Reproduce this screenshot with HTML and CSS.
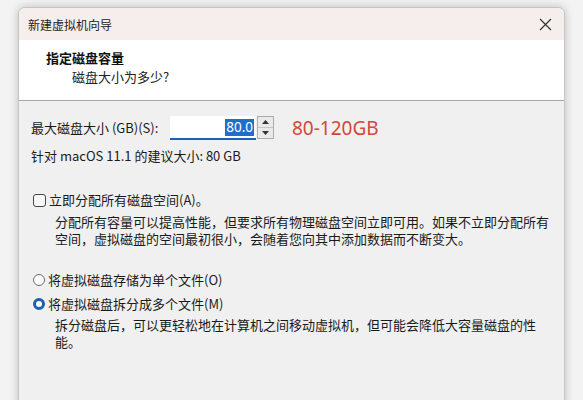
FILE: index.html
```html
<!DOCTYPE html>
<html lang="zh-CN">
<head>
<meta charset="utf-8">
<title>新建虚拟机向导</title>
<link rel="stylesheet" href="styles.css">
</head>
<body>
<div class="window">
  <div class="titlebar">
    <span class="title">新建虚拟机向导</span>
    <span class="close">
      <svg width="13" height="13" viewBox="0 0 13 13"><path d="M1 1 L12 12 M12 1 L1 12" stroke="#333" stroke-width="1.2" fill="none"/></svg>
    </span>
  </div>
  <div class="header">
    <div class="h-title">指定磁盘容量</div>
    <div class="h-sub">磁盘大小为多少?</div>
  </div>
  <div class="content">
    <div class="field-row">
      <span class="label">最大磁盘大小 (GB)(S):</span>
      <div class="spin">
        <div class="input"><span class="sel">80.0</span></div>
        <div class="spin-btns">
          <div class="sb"><svg width="7" height="4" viewBox="0 0 7 4"><path d="M0 4 L3.5 0 L7 4Z" fill="#333"/></svg></div>
          <div class="sb"><svg width="7" height="4" viewBox="0 0 7 4"><path d="M0 0 L3.5 4 L7 0Z" fill="#333"/></svg></div>
        </div>
      </div>
      <span class="note">80-120GB</span>
    </div>
    <div class="rec">针对 macOS 11.1 的建议大小: 80 GB</div>

    <div class="opt first">
      <span class="checkbox"></span>
      <span class="opt-label">立即分配所有磁盘空间(A)。</span>
    </div>
    <p class="desc">分配所有容量可以提高性能，但要求所有物理磁盘空间立即可用。如果不立即分配所有<br>空间，虚拟磁盘的空间最初很小，会随着您向其中添加数据而不断变大。</p>

    <div class="opt radio-first">
      <span class="radio"></span>
      <span class="opt-label">将虚拟磁盘存储为单个文件(O)</span>
    </div>
    <div class="opt radio-second">
      <span class="radio on"></span>
      <span class="opt-label">将虚拟磁盘拆分成多个文件(M)</span>
    </div>
    <p class="desc last">拆分磁盘后，可以更轻松地在计算机之间移动虚拟机，但可能会降低大容量磁盘的性<br>能。</p>
  </div>
</div>
</body>
</html>
```
FILE: styles.css
```css
html, body {
  margin: 0;
  padding: 0;
}
body {
  width: 583px;
  height: 400px;
  overflow: hidden;
  background: #f3f3f3;
  font-family: "Noto Sans CJK SC", "Noto Sans", sans-serif;
  color: #1a1a1a;
}
.window {
  margin: 7px 0 0 18px;
  width: 545px;
  height: 420px;
  border: 1px solid #c4c4c4;
  border-radius: 7px 7px 0 0;
  background: #f0f0f0;
  box-shadow: 0 0 10px rgba(0,0,0,0.22);
  overflow: hidden;
}
.titlebar {
  height: 32px;
  background: #f6eeed;
  display: flex;
  align-items: center;
  justify-content: space-between;
  padding: 0 12px 0 9px;
}
.title {
  font-size: 12px;
  color: #222;
}
.close {
  display: flex;
  align-items: center;
}
.header {
  height: 61px;
  background: #ffffff;
  border-bottom: 1px solid #a9a9a9;
  padding: 8px 0 0 27px;
  box-sizing: border-box;
}
.h-title {
  font-size: 13px;
  font-weight: bold;
  line-height: 19px;
  color: #111;
}
.h-sub {
  font-size: 13px;
  line-height: 19px;
  padding-left: 26px;
  color: #222;
}
.content {
  padding: 15px 0 0 12px;
  font-size: 13px;
}
.field-row {
  display: flex;
  align-items: center;
  height: 24px;
}
.label {
  line-height: 18px;
  width: 139px;
}
.spin {
  display: flex;
  align-items: flex-start;
  height: 24px;
}
.input {
  width: 84px;
  height: 22px;
  background: #fff;
  border-bottom: 2px solid #1f5fb4;
  display: flex;
  justify-content: flex-end;
  align-items: center;
  padding-right: 2px;
}
.sel {
  background: #1d6fcc;
  color: #fff;
  font-size: 13.5px;
  line-height: 17px;
  font-family: "Noto Sans", sans-serif;
  padding: 0 1px;
}
.spin-btns {
  width: 17px;
  height: 23px;
  border: 1px solid #adadad;
  background: #e9e9e9;
  display: flex;
  flex-direction: column;
  margin-left: 1px;
  box-sizing: border-box;
}
.sb {
  flex: 1;
  display: flex;
  align-items: center;
  justify-content: center;
}
.sb + .sb {
  border-top: 1px solid #c6c6c6;
}
.note {
  margin-left: 18px;
  font-family: "Noto Sans", sans-serif;
  font-size: 19px;
  color: #d5463b;
  line-height: 22px;
}
.rec {
  margin-top: 7px;
  line-height: 18px;
}
.opt {
  display: flex;
  align-items: center;
  height: 18px;
  line-height: 18px;
}
.opt.first {
  margin-top: 26px;
}
.opt.radio-first {
  margin-top: 24px;
}
.opt.radio-second {
  margin-top: 6px;
}
.checkbox {
  width: 13px;
  height: 13px;
  border: 1px solid #444;
  border-radius: 3px;
  background: #f7f7f7;
  margin-left: 2px;
  margin-right: 3px;
  box-sizing: border-box;
}
.radio {
  width: 12px;
  height: 12px;
  border: 1px solid #6e6e6e;
  border-radius: 50%;
  background: #fbfbfb;
  margin-left: 2px;
  margin-right: 3px;
  box-sizing: border-box;
}
.radio.on {
  border: 3.5px solid #1c5fb0;
  background: #fff;
}
.desc {
  margin: 4px 0 0 24px;
  line-height: 17px;
  font-size: 13px;
}
.desc.last {
  margin-top: 3px;
}
```
